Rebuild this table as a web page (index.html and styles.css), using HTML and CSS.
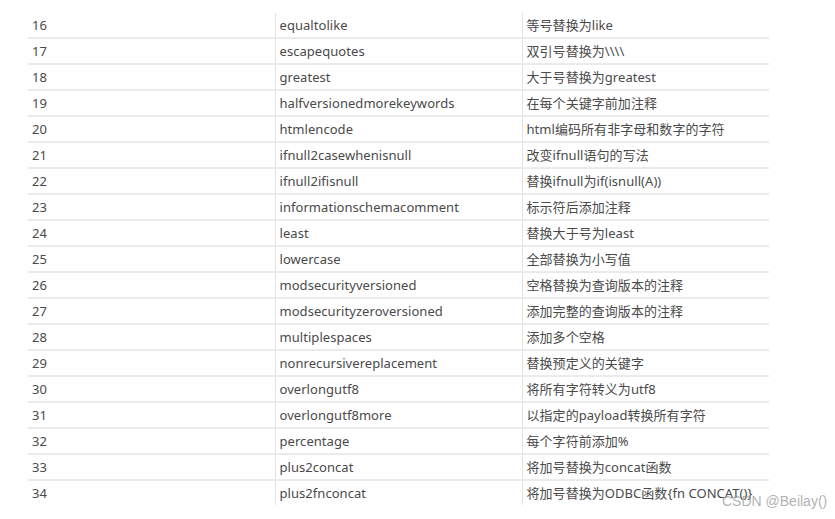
FILE: index.html
```html
<!DOCTYPE html>
<html lang="zh">
<head>
<meta charset="utf-8">
<link rel="stylesheet" href="styles.css">
</head>
<body>
<div class="page">
<table class="tbl">
<tbody>
<tr><td>16</td><td>equaltolike</td><td>等号替换为like</td></tr>
<tr><td>17</td><td>escapequotes</td><td>双引号替换为\\\\</td></tr>
<tr><td>18</td><td>greatest</td><td>大于号替换为greatest</td></tr>
<tr><td>19</td><td>halfversionedmorekeywords</td><td>在每个关键字前加注释</td></tr>
<tr><td>20</td><td>htmlencode</td><td>html编码所有非字母和数字的字符</td></tr>
<tr><td>21</td><td>ifnull2casewhenisnull</td><td>改变ifnull语句的写法</td></tr>
<tr><td>22</td><td>ifnull2ifisnull</td><td>替换ifnull为if(isnull(A))</td></tr>
<tr><td>23</td><td>informationschemacomment</td><td>标示符后添加注释</td></tr>
<tr><td>24</td><td>least</td><td>替换大于号为least</td></tr>
<tr><td>25</td><td>lowercase</td><td>全部替换为小写值</td></tr>
<tr><td>26</td><td>modsecurityversioned</td><td>空格替换为查询版本的注释</td></tr>
<tr><td>27</td><td>modsecurityzeroversioned</td><td>添加完整的查询版本的注释</td></tr>
<tr><td>28</td><td>multiplespaces</td><td>添加多个空格</td></tr>
<tr><td>29</td><td>nonrecursivereplacement</td><td>替换预定义的关键字</td></tr>
<tr><td>30</td><td>overlongutf8</td><td>将所有字符转义为utf8</td></tr>
<tr><td>31</td><td>overlongutf8more</td><td>以指定的payload转换所有字符</td></tr>
<tr><td>32</td><td>percentage</td><td>每个字符前添加%</td></tr>
<tr><td>33</td><td>plus2concat</td><td>将加号替换为concat函数</td></tr>
<tr><td>34</td><td>plus2fnconcat</td><td>将加号替换为ODBC函数{fn CONCAT()}</td></tr>
</tbody>
</table>
<div class="wm">CSDN @Beilay()</div>
</div>
</body>
</html>
```

FILE: styles.css
```css
html, body {
  margin: 0;
  padding: 0;
  background: #ffffff;
}
.page {
  position: relative;
  width: 835px;
  height: 519px;
  overflow: hidden;
  padding: 13px 0 0 28px;
  box-sizing: border-box;
}
.tbl {
  border-collapse: collapse;
  table-layout: fixed;
  width: 741px;
  font-family: "Noto Sans", "Noto Sans CJK SC", sans-serif;
  font-size: 13px;
  letter-spacing: 0.05px;
  color: #4a4a4a;
}
.tbl td {
  width: 247px;
  height: 24px;
  padding: 0 0 0 4px;
  box-sizing: border-box;
  white-space: nowrap;
  vertical-align: middle;
  border-bottom: 2px solid #ebebeb;
  line-height: 24px;
}
.tbl tr:last-child td {
  border-bottom: none;
}
.tbl td + td {
  border-left: 1px solid #e2e2e2;
  padding-left: 4px;
}
.wm {
  position: absolute;
  left: 722px;
  top: 493px;
  font-family: "Liberation Sans", Arial, sans-serif;
  font-size: 14px;
  color: rgba(150, 150, 150, 0.75);
  white-space: nowrap;
}
```
